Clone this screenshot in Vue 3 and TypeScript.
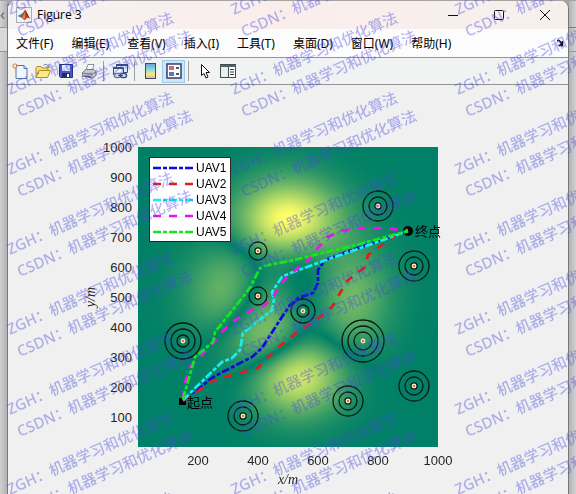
<script setup lang="ts">
import { onMounted, ref } from 'vue'

interface Threat { x: number; y: number; radii: number[] }
interface Route { name: string; color: string; dash: string; points: string }

const menus = ['文件(F)', '编辑(E)', '查看(V)', '插入(I)', '工具(T)', '桌面(D)', '窗口(W)', '帮助(H)']
const yTicks = [1000, 900, 800, 700, 600, 500, 400, 300, 200, 100]
const xTicks = [200, 400, 600, 800, 1000]

const threats: Threat[] = [
  { x: 800, y: 800, radii: [50, 30, 10] },
  { x: 400, y: 650, radii: [30, 10] },
  { x: 400, y: 500, radii: [30, 10] },
  { x: 550, y: 450, radii: [40, 20] },
  { x: 150, y: 350, radii: [60, 40, 20] },
  { x: 350, y: 100, radii: [50, 30, 10] },
  { x: 700, y: 150, radii: [50, 30, 10] },
  { x: 750, y: 350, radii: [70, 50, 30] },
  { x: 920, y: 200, radii: [50, 30, 10] },
  { x: 920, y: 600, radii: [50, 30, 10] },
]

const dashDot = '8 2 4 2'
const dashed = '8 8'
const routes: Route[] = [
  { name: 'UAV1', color: '#0b0bd8', dash: dashDot, points: '45,253 77,229 114,210 124,201 140,176 144,170 152,158 160,151 175,146 180,136 180,123 187,113 214,103 270,84' },
  { name: 'UAV2', color: '#e8191c', dash: dashed, points: '45,254 60,244 74,234 87,230 105,225 120,221 130,210 142,199 157,187 169,179 182,170 194,160 202,146 210,133 227,120 230,108 244,98 257,88 270,84' },
  { name: 'UAV3', color: '#16eef2', dash: dashDot, points: '45,253 84,215 94,211 102,203 105,186 134,163 136,152 134,145 144,130 150,127 185,114 214,104 270,84' },
  { name: 'UAV4', color: '#ee14ee', dash: dashed, points: '45,252 47,236 51,221 62,210 75,196 84,185 94,175 114,163 125,159 135,150 144,135 154,126 170,113 180,101 190,90 204,84 220,81 237,81 254,82 270,83' },
  { name: 'UAV5', color: '#14e81c', dash: dashDot, points: '45,252 57,210 75,195 77,185 97,160 108,146 113,139 122,121 130,118 152,114 180,107 214,99 270,84' },
]

const px = (x: number): number => x * 0.3
const py = (y: number): number => 300 - y * 0.3

const stamps: { x: number; y: number; text: string }[] = []
for (let col = 0; col < 9; col++) {
  for (let row = 0; row < 16; row++) {
    stamps.push({ x: 10 + col * 224, y: 15 + row * 80, text: 'ZGH：机器学习和优化算法' })
    stamps.push({ x: 20 + col * 224, y: 37 + row * 80, text: 'CSDN：机器学习和优化算法' })
  }
}

const terrain = ref<HTMLCanvasElement | null>(null)

// Absolute value of the classic three-term "peaks" surface
function height(x: number, y: number): number {
  const a = 3 * (1 - x) ** 2 * Math.exp(-x * x - (y + 1) ** 2)
  const b = 10 * (x / 5 - x ** 3 - y ** 5) * Math.exp(-x * x - y * y)
  const c = Math.exp(-((x + 1) ** 2) - y * y) / 3
  return Math.abs(a - b - c)
}

onMounted(() => {
  const ctx = terrain.value?.getContext('2d')
  if (!ctx) return
  const size = 300
  const image = ctx.createImageData(size, size)
  for (let j = 0; j < size; j++) {
    for (let i = 0; i < size; i++) {
      const t = Math.min(1, height(i / 50 - 3, 3 - j / 50) / 8.1)
      const k = (j * size + i) * 4
      image.data[k] = 255 * t
      image.data[k + 1] = 128 + 127 * t
      image.data[k + 2] = 102
      image.data[k + 3] = 255
    }
  }
  ctx.putImageData(image, 0, 0)
})
</script>

<template>
  <div class="desktop">
    <div class="edge left"><span>‹</span></div>
    <main class="window">
      <header class="titlebar">
        <svg class="logo" viewBox="0 0 16 16">
          <rect x=".5" y=".5" width="15" height="15" fill="#f2f3f5" stroke="#a9adb5" />
          <path d="M1.5 9 5.5 7 7.5 5 8 8 6 11 4.5 10.2z" fill="#3f77a6" />
          <path d="M6 11 7.5 5 9.2 2.5 10.5 5 14 12 11.5 10.5 8.5 13.5z" fill="#c63f1c" />
          <path d="M9.2 2.5 10.5 5 14 12 11 9z" fill="#8e2415" />
          <path d="M6.5 10.5 8.7 5 9 10 8.2 13z" fill="#ee8a35" />
        </svg>
        <h1>Figure 3</h1>
        <div class="controls">
          <button aria-label="Minimize"><svg viewBox="0 0 12 12"><path d="M1 6.5h10" /></svg></button>
          <button aria-label="Maximize"><svg viewBox="0 0 12 12"><rect x="1.5" y="1.5" width="9" height="9" rx="1" /></svg></button>
          <button aria-label="Close"><svg viewBox="0 0 12 12"><path d="M1 1l10 10M11 1 1 11" /></svg></button>
        </div>
      </header>

      <nav class="menubar">
        <button v-for="m in menus" :key="m">{{ m }}</button>
        <svg class="dock" viewBox="0 0 8 8"><path d="M1 1.500h2l3 3M6.500 2v4.500H2.500M4 5l2 1" /></svg>
      </nav>

      <div class="toolbar" role="toolbar">
        <button aria-label="New figure">
          <svg viewBox="0 0 16 16">
            <path d="M4 2.5h8l3 3v10H4z" fill="#eef5fd" stroke="#5877a5" />
            <path d="M12 2.5v3h3" fill="#c5d8ee" stroke="#5877a5" />
            <path d="M3 0v6M0 3h6M1 1l4 4M5 1 1 5" stroke="#e07b42" />
            <circle cx="3" cy="3" r="1.2" fill="#fff2b0" />
          </svg>
        </button>
        <button aria-label="Open">
          <svg viewBox="0 0 16 16">
            <path d="M1 14.500V4.500l1-1h4l1 1.500h6v3" fill="#f8e07a" stroke="#b08a1c" />
            <path d="M1 14.500 4 7.500h11.500l-3 7z" fill="#fdec8c" stroke="#b08a1c" />
            <path d="M8.500 2.500c2-2 4-1 5 1M14 1v3h-3" fill="none" stroke="#60799b" />
          </svg>
        </button>
        <button aria-label="Save">
          <svg viewBox="0 0 16 16">
            <path d="M1.500 1.500h13v13h-12l-1-1z" fill="#4a55bd" stroke="#26327f" />
            <path d="M4 2h8v6H4z" fill="#e3edfb" />
            <path d="M4 10h8v4H4z" fill="#22296b" />
            <path d="M9 11h2v3H9z" fill="#fff" />
          </svg>
        </button>
        <button aria-label="Print">
          <svg viewBox="0 0 16 16">
            <path d="M5 7 7 1.500h6L11.500 7" fill="#fafbff" stroke="#8b8f9b" />
            <path d="M1.500 9.500 5 6.500h8l2 2v4l-4 2.500-9.500-2z" fill="#c9cacd" stroke="#77797f" />
            <path d="M2 10l9 1.500 4-3" fill="none" stroke="#77797f" />
            <path d="M4 13l6 1" stroke="#444" />
          </svg>
        </button>
        <i class="sep"></i>
        <button aria-label="Link plot">
          <svg viewBox="0 0 16 16">
            <path d="M4.500 1.500h11v8h-11z" fill="#dfe9f5" stroke="#344f7d" />
            <path d="M4 2h12" stroke="#344f7d" stroke-width="2" />
            <path d="M1.500 4.500h10v7h-10z" fill="#f2f6fb" stroke="#344f7d" />
            <path d="M1 5.500h11" stroke="#344f7d" />
            <rect x="2.500" y="10.500" width="6" height="4" rx="2" fill="#e6eef8" stroke="#60799b" stroke-width="1.500" />
            <rect x="8.500" y="10.500" width="6" height="4" rx="2" fill="#e6eef8" stroke="#344f7d" stroke-width="1.500" />
            <path d="M6 12.500h5" stroke="#344f7d" />
          </svg>
        </button>
        <i class="sep"></i>
        <button aria-label="Insert colorbar">
          <svg viewBox="0 0 16 16">
            <defs>
              <linearGradient id="bar" x2="0" y2="1">
                <stop offset="0" stop-color="#6e9be4" /><stop offset=".4" stop-color="#85ddd6" />
                <stop offset=".7" stop-color="#f4e993" /><stop offset="1" stop-color="#f4b17c" />
              </linearGradient>
            </defs>
            <rect x="2.500" y=".5" width="10" height="15" fill="url(#bar)" stroke="#3d4966" />
          </svg>
        </button>
        <button class="active" aria-label="Insert legend" aria-pressed="true">
          <svg viewBox="0 0 16 16">
            <rect x="1" y="1" width="14" height="14" fill="#fff" stroke="#304067" stroke-width="1.500" />
            <rect x="3" y="3" width="5" height="4" fill="#d66772" /><rect x="3" y="9" width="5" height="4" fill="#686fc4" />
            <path d="M10 5h3M10 11h3" stroke="#222" stroke-width="1.500" />
          </svg>
        </button>
        <i class="sep"></i>
        <button aria-label="Edit plot">
          <svg viewBox="0 0 16 16"><path d="M4.500 1.500v11l2.500-2 2 4.500 2-1-2-4.500h3.500z" fill="#fff" stroke="#111" /></svg>
        </button>
        <button aria-label="Property inspector">
          <svg viewBox="0 0 16 16">
            <rect x=".5" y="1.500" width="15" height="13" fill="#e9eeee" stroke="#444d4f" />
            <path d="M0 3h16" stroke="#53636a" stroke-width="2" />
            <rect x="9" y="4" width="6" height="10" fill="#fff" /><path d="M8.500 4v10" stroke="#444d4f" />
            <path d="M10 6.500h4M10 9h4M10 11.500h4" stroke="#333" />
          </svg>
        </button>
      </div>

      <section class="figure">
        <div class="yaxis">
          <span class="ylabel">y/m</span>
          <ol><li v-for="t in yTicks" :key="t">{{ t }}</li></ol>
        </div>
        <div class="plot">
          <canvas ref="terrain" width="300" height="300"></canvas>
          <svg viewBox="0 0 300 300">
            <rect x="41" y="251" width="7" height="7" />
            <circle cx="270" cy="84" r="5" />
            <g v-for="t in threats" :key="`${t.x}-${t.y}`">
              <circle v-for="r in t.radii" :key="r" class="ring" :cx="px(t.x)" :cy="py(t.y) - 1" :r="px(r)" />
              <circle class="core" :cx="px(t.x)" :cy="py(t.y) - 1" r="1.700" />
            </g>
            <polyline v-for="r in routes" :key="r.name" class="route" :points="r.points" :stroke="r.color" :stroke-dasharray="r.dash" />
            <text class="place" x="49" y="260">起点</text>
            <text class="place" x="277" y="89">终点</text>
          </svg>
          <ul class="legend">
            <li v-for="r in routes" :key="r.name">
              <svg viewBox="0 0 40 4"><line x2="40" y1="2" y2="2" class="route" :stroke="r.color" :stroke-dasharray="r.dash" /></svg>
              {{ r.name }}
            </li>
          </ul>
        </div>
        <ol class="xticks"><li v-for="t in xTicks" :key="t">{{ t }}</li></ol>
        <span class="xlabel">x/m</span>
      </section>
    </main>
    <div class="edge right"></div>

    <svg class="watermark" aria-hidden="true">
      <text v-for="(s, i) in stamps" :key="i" :transform="`translate(${s.x} ${s.y}) rotate(-24)`">{{ s.text }}</text>
    </svg>
  </div>
</template>

<style>
body { margin: 0; }
</style>

<style scoped>
.desktop {
  position: relative;
  display: flex;
  min-height: 100vh;
  overflow: hidden;
  box-sizing: border-box;
  padding-top: 1px;
  background: #a5a3a4;
  font-family: "Noto Sans", "Noto Sans CJK SC", sans-serif;
}
button { border: 0; padding: 0; background: none; font: inherit; color: inherit; }
ol, ul { margin: 0; padding: 0; list-style: none; }
svg { display: block; }
.edge { flex: none; }
.left {
  width: 7px;
  background: linear-gradient(90deg, #d0cfd1, #b3b2b5);
  color: #666;
  font-size: 16px;
  line-height: 26px;
}
.left span { display: block; border-bottom: 1px solid #999; }
.left::after { content: ""; display: block; height: 23px; border-bottom: 1px solid #999; background: #d8d8d8; }
.right {
  width: 7px;
  background: linear-gradient(90deg, #b4b4b4, #d2d2d2);
}
.right::before { content: ""; display: block; height: 26px; border-bottom: 1px solid #777; }
.right::after { content: ""; display: block; height: 23px; border-bottom: 1px solid #999; }
.window {
  flex: 1;
  min-width: 0;
  border: 1px solid #77777a;
  border-width: 0 1px;
  border-radius: 8px 8px 0 0;
  overflow: hidden;
  background: #f0f0f0;
}
.titlebar {
  display: flex;
  align-items: center;
  height: 28px;
  padding-left: 8px;
  background: linear-gradient(90deg, #f5f2f3, #faeeeb 50%, #f6f0ed);
}
.logo { width: 16px; height: 16px; }
h1 { margin: 0 0 0 5px; font-family: "Open Sans", sans-serif; font-size: 12px; font-weight: 400; line-height: 16px; }
.controls { display: flex; margin-left: auto; }
.controls button { display: grid; place-items: center; width: 46px; height: 28px; }
.controls svg { width: 12px; height: 12px; fill: none; stroke: #111; }
.menubar {
  display: flex;
  align-items: center;
  gap: 18px;
  height: 28px;
  padding: 0 4px 0 8px;
  border-bottom: 1px solid #929496;
  background: #fdfcfc;
  font-size: 12px;
  white-space: nowrap;
}
.dock { width: 8px; height: 8px; margin-left: auto; fill: none; stroke: #111; stroke-width: 1.500; }
.toolbar {
  display: flex;
  align-items: center;
  height: 26px;
  border-bottom: 1px solid #929496;
  background: #f1f2f2;
}
.toolbar button { display: grid; place-items: center; flex: none; box-sizing: border-box; width: 23px; height: 23px; }
.toolbar svg { width: 16px; height: 16px; fill: none; }
.toolbar .active { border: 1px solid #9ccbec; background: #cfe6f8; }
.sep { width: 1px; height: 20px; margin: 0 4px 0 3px; background: #a0a0a0; }
.figure {
  display: grid;
  grid-template-columns: 1fr 300px 1fr;
  align-items: start;
  padding-top: 47px;
  color: #262626;
  font-family: "Liberation Sans", sans-serif;
  font-size: 13px;
}
.yaxis { display: flex; justify-content: flex-end; align-items: center; gap: 4px; padding-right: 6px; }
.yaxis li { height: 30px; line-height: 32px; text-align: right; }
.ylabel, .xlabel { font-family: "Liberation Serif", serif; font-style: italic; font-size: 14px; line-height: 16px; }
.ylabel { margin-top: 30px; writing-mode: vertical-rl; transform: rotate(180deg); }
.plot { display: grid; margin-top: 15px; }
.plot > * { grid-area: 1 / 1; }
.plot > svg { width: 300px; height: 300px; overflow: visible; }
.ring { fill: none; stroke: #0b1a12; stroke-width: 1.300; }
.core { fill: #d9307c; stroke: #fbe4a0; stroke-width: 1.500; }
.route { fill: none; stroke-width: 2.700; }
.place { fill: #000; font-family: "Noto Sans CJK SC", sans-serif; font-size: 13px; }
.legend {
  place-self: start;
  margin: 10px 0 0 11px;
  padding: 2px 4px 1px 3px;
  border: 1px solid #262626;
  background: #fff;
  color: #000;
  font-size: 12px;
}
.legend li { display: flex; align-items: center; gap: 3px; line-height: 16px; }
.legend svg { width: 40px; height: 4px; }
.xticks { grid-column: 2 / 4; display: flex; padding: 5px 0 0 30px; }
.xticks li { width: 60px; line-height: 18px; text-align: center; }
.xlabel { grid-column: 2; padding-top: 2px; text-align: center; }
.watermark { position: absolute; inset: 0; width: 100%; height: 100%; pointer-events: none; }
.watermark text { font-family: "Noto Sans", "Noto Sans CJK SC", sans-serif; font-size: 15px; font-weight: 500; fill: #4848e0; fill-opacity: 0.400; }
</style>
